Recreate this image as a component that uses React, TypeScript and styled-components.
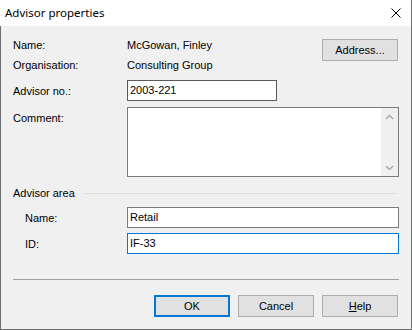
import * as React from 'react'
import styled, { createGlobalStyle } from 'styled-components'

const GlobalStyle = createGlobalStyle`
  html, body {
    margin: 0;
    padding: 0;
    background: #ffffff;
  }
  * {
    box-sizing: border-box;
  }
`

const Window = styled.div`
  width: 412px;
  height: 330px;
  display: flex;
  flex-direction: column;
  background: #f0f0f0;
  border-right: 1px solid #707070;
  border-bottom: 1px solid #707070;
  font-family: "Liberation Sans", Arial, sans-serif;
  font-size: 11px;
  color: #000;
`

const TitleBar = styled.div`
  height: 26px;
  display: flex;
  align-items: center;
  justify-content: space-between;
  background: #ffffff;
  padding: 0 10px 0 5px;
`

const Title = styled.div`
  font-family: "Noto Sans", "Liberation Sans", sans-serif;
  font-size: 11.5px;
  padding-bottom: 1px;
`

const CloseIcon = styled.svg`
  width: 10px;
  height: 10px;
  display: block;
`

const Body = styled.div`
  flex: 1;
  border-left: 1px solid #707070;
  padding: 9px 12px 0 12px;
  display: flex;
  flex-direction: column;
`

const InfoBlock = styled.div`
  display: grid;
  grid-template-columns: 114px 1fr auto;
  grid-template-rows: 20px 20px;
  align-items: center;
`

const Row = styled.div<{ $top: number }>`
  display: flex;
  align-items: center;
  margin-top: ${(p) => p.$top}px;
`

const TopRow = styled(Row)`
  align-items: flex-start;
`

const Label = styled.div<{ $indent?: boolean }>`
  width: 114px;
  flex: none;
  padding-left: ${(p) => (p.$indent ? 12 : 0)}px;
`

const CommentLabel = styled(Label)`
  padding-top: 5px;
`

const Value = styled.div``

const Field = styled.input<{ $width?: number; $focused?: boolean; $dark?: boolean }>`
  width: ${(p) => (p.$width ? `${p.$width}px` : 'auto')};
  flex: ${(p) => (p.$width ? 'none' : '1')};
  height: 21px;
  padding: 0 0 1px 2px;
  margin: 0;
  border: 1px solid ${(p) => (p.$focused ? '#0078d7' : p.$dark ? '#5a5a5a' : '#7a7a7a')};
  background: #fff;
  font-family: "Liberation Sans", Arial, sans-serif;
  font-size: 11px;
  color: #000;
  outline: none;
`

const TextBox = styled.div`
  flex: 1;
  height: 70px;
  border: 1px solid #7a7a7a;
  background: #fff;
  display: flex;
  justify-content: flex-end;
`

const ScrollBar = styled.div`
  width: 17px;
  background: #f0f0f0;
  display: flex;
  flex-direction: column;
  justify-content: space-between;
  align-items: center;
  padding: 6px 0 5px;
`

const Chevron = styled.svg`
  width: 9px;
  height: 6px;
  display: block;
`

const GroupHeader = styled.div`
  display: flex;
  align-items: center;
  gap: 9px;
  height: 16px;
  margin-top: 8px;
  padding-right: 2px;
`

const GroupLine = styled.div`
  flex: 1;
  height: 1px;
  background: #dcdcdc;
`

const Separator = styled.div`
  height: 1px;
  background: #a0a0a0;
  margin-top: 25px;
`

const ButtonRow = styled.div`
  display: flex;
  justify-content: flex-end;
  gap: 8px;
  margin-top: 15px;
  padding-right: 1px;
`

const Button = styled.button<{ $primary?: boolean }>`
  width: 76px;
  height: 22px;
  padding: 0 0 1px;
  margin: 0;
  background: #e1e1e1;
  border: ${(p) => (p.$primary ? '2px solid #0078d7' : '1px solid #adadad')};
  font-family: "Liberation Sans", Arial, sans-serif;
  font-size: 11px;
  color: #000;
`

const AddressButton = styled(Button)`
  grid-row: 1 / span 2;
  grid-column: 3;
  align-self: start;
  margin-top: 4px;
  margin-right: 1px;
`

const Mnemonic = styled.span`
  text-decoration: underline;
`

const App: React.FC = () => {
  return (
    <Window>
      <GlobalStyle />
      <TitleBar>
        <Title>Advisor properties</Title>
        <CloseIcon viewBox="0 0 10 10">
          <path d="M0.5 0.5 L9.5 9.5 M9.5 0.5 L0.5 9.5" stroke="#000" strokeWidth="1" fill="none" />
        </CloseIcon>
      </TitleBar>
      <Body>
        <InfoBlock>
          <Label>Name:</Label>
          <Value>McGowan, Finley</Value>
          <AddressButton>Address...</AddressButton>
          <Label>Organisation:</Label>
          <Value>Consulting Group</Value>
        </InfoBlock>
        <Row $top={5}>
          <Label>Advisor no.:</Label>
          <Field $width={150} $dark value="2003-221" readOnly />
        </Row>
        <TopRow $top={6}>
          <CommentLabel>Comment:</CommentLabel>
          <TextBox>
            <ScrollBar>
              <Chevron viewBox="0 0 9 6">
                <path d="M1 5 L4.5 1.5 L8 5" stroke="#a6a6a6" strokeWidth="1.4" fill="none" />
              </Chevron>
              <Chevron viewBox="0 0 9 6">
                <path d="M1 1 L4.5 4.5 L8 1" stroke="#a6a6a6" strokeWidth="1.4" fill="none" />
              </Chevron>
            </ScrollBar>
          </TextBox>
        </TopRow>
        <GroupHeader>
          <span>Advisor area</span>
          <GroupLine />
        </GroupHeader>
        <Row $top={6}>
          <Label $indent>Name:</Label>
          <Field value="Retail" readOnly />
        </Row>
        <Row $top={5}>
          <Label $indent>ID:</Label>
          <Field $focused value="IF-33" readOnly />
        </Row>
        <Separator />
        <ButtonRow>
          <Button $primary>OK</Button>
          <Button>Cancel</Button>
          <Button>
            <Mnemonic>H</Mnemonic>elp
          </Button>
        </ButtonRow>
      </Body>
    </Window>
  )
}

export default App
